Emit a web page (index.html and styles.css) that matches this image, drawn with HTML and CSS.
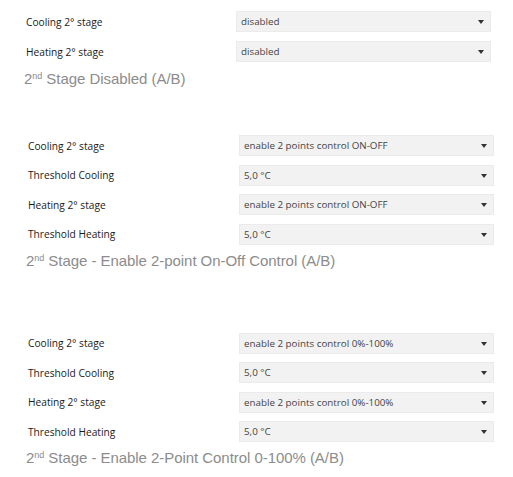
FILE: index.html
```html
<!DOCTYPE html>
<html>
<head>
<meta charset="utf-8">
<link rel="stylesheet" href="styles.css">
</head>
<body>
<section class="sec sec1">
  <div class="rows">
    <div class="row"><span class="label">Cooling 2° stage</span><div class="select">disabled<span class="arrow"></span></div></div>
    <div class="row"><span class="label">Heating 2° stage</span><div class="select">disabled<span class="arrow"></span></div></div>
  </div>
  <h2 class="title">2<sup>nd</sup> Stage Disabled (A/B)</h2>
</section>
<section class="sec sec2">
  <div class="rows">
    <div class="row"><span class="label">Cooling 2° stage</span><div class="select">enable 2 points control ON-OFF<span class="arrow"></span></div></div>
    <div class="row"><span class="label">Threshold Cooling</span><div class="select">5,0 °C<span class="arrow"></span></div></div>
    <div class="row"><span class="label">Heating 2° stage</span><div class="select">enable 2 points control ON-OFF<span class="arrow"></span></div></div>
    <div class="row"><span class="label">Threshold Heating</span><div class="select">5,0 °C<span class="arrow"></span></div></div>
  </div>
  <h2 class="title">2<sup>nd</sup> Stage - Enable 2-point On-Off Control (A/B)</h2>
</section>
<section class="sec sec3">
  <div class="rows">
    <div class="row"><span class="label">Cooling 2° stage</span><div class="select">enable 2 points control 0%-100%<span class="arrow"></span></div></div>
    <div class="row"><span class="label">Threshold Cooling</span><div class="select">5,0 °C<span class="arrow"></span></div></div>
    <div class="row"><span class="label">Heating 2° stage</span><div class="select">enable 2 points control 0%-100%<span class="arrow"></span></div></div>
    <div class="row"><span class="label">Threshold Heating</span><div class="select">5,0 °C<span class="arrow"></span></div></div>
  </div>
  <h2 class="title">2<sup>nd</sup> Stage - Enable 2-Point Control 0-100% (A/B)</h2>
</section>
</body>
</html>
```
FILE: styles.css
```css
html, body {
  margin: 0;
  padding: 0;
  background: #ffffff;
}
body {
  width: 513px;
  height: 477px;
  overflow: hidden;
}
.sec {
  display: flex;
  flex-direction: column;
}
.sec1 {
  padding: 11px 0 0 26px;
}
.sec2 {
  padding: 47px 0 0 28px;
}
.sec3 {
  padding: 63px 0 0 28px;
}
.rows {
  display: flex;
  flex-direction: column;
}
.sec1 .rows { gap: 9px; }
.sec2 .rows, .sec3 .rows { gap: 8.5px; }
.row {
  display: flex;
  align-items: center;
  height: 21px;
}
.label {
  font-family: "Open Sans", sans-serif;
  font-size: 10.2px;
  color: #1a1a1a;
  width: 210px;
  flex: none;
}
.sec2 .label, .sec3 .label { width: 211px; }
.select {
  position: relative;
  box-sizing: border-box;
  width: 255px;
  height: 21px;
  background: #f2f2f2;
  border: 1px solid #ebebeb;
  font-family: "Open Sans", sans-serif;
  font-size: 9.8px;
  color: #444;
  line-height: 19px;
  padding-left: 4px;
}
.arrow {
  position: absolute;
  right: 6px;
  top: 8px;
  width: 0;
  height: 0;
  border-left: 3.5px solid transparent;
  border-right: 3.5px solid transparent;
  border-top: 4px solid #333;
}
.title {
  margin: 0;
  font-family: "Liberation Sans", Arial, sans-serif;
  font-weight: normal;
  font-size: 15px;
  line-height: 18px;
  color: #8c8c8c;
  margin-left: -2px;
  margin-top: 7px;
  letter-spacing: -0.05px;
}
.sec1 .title { margin-top: 8px; }
.title sup {
  font-size: 9px;
  vertical-align: 5px;
  line-height: 0;
}
```
